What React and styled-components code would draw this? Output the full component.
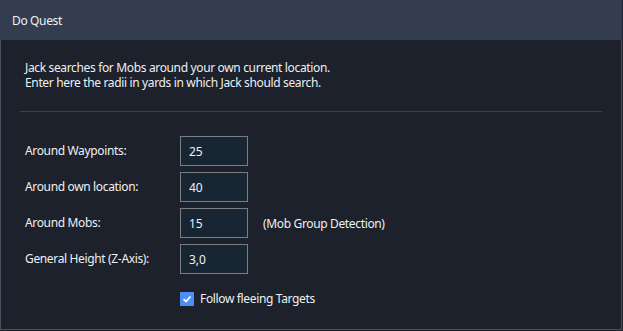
import { Fragment } from "react"
import styled, { createGlobalStyle } from "styled-components"

const GlobalStyle = createGlobalStyle`
  body {
    margin: 0;
    background: #1c212b;
    font-family: "Noto Sans", "Open Sans", sans-serif;
    font-size: 12px;
    letter-spacing: -0.35px;
    color: #eef0f3;
  }
`

const Panel = styled.div`
  width: 622px;
  height: 330px;
  display: flex;
  flex-direction: column;
  box-sizing: border-box;
`

const Header = styled.div`
  height: 40px;
  flex-shrink: 0;
  background: #343d4f;
  display: flex;
  align-items: center;
  padding-left: 12px;
`

const Body = styled.div`
  flex: 1;
  background: #1c212b;
  border: 1px solid #4a505c;
  border-top: none;
  padding: 20px 19px 0 19px;
`

const Intro = styled.p`
  margin: 0;
  padding: 0 5px;
  line-height: 15px;
`

const Separator = styled.hr`
  border: none;
  height: 1px;
  background: #3a404c;
  margin: 21px 0 24px 0;
`

const Form = styled.div`
  display: grid;
  grid-template-columns: 155px 68px auto;
  row-gap: 6px;
  padding-left: 5px;
  align-items: center;
`

const Label = styled.label`
  line-height: 30px;
`

const Input = styled.input`
  box-sizing: border-box;
  width: 68px;
  height: 30px;
  background: #182633;
  border: 1px solid #7a7d82;
  color: #eef0f3;
  font: inherit;
  padding: 0 8px;
  outline: none;
`

const Note = styled.span`
  padding-left: 15px;
`

const CheckRow = styled.label`
  grid-column: 2 / span 2;
  display: flex;
  align-items: center;
  gap: 6px;
  margin-top: 10px;
`

const Box = styled.span`
  width: 14px;
  height: 14px;
  background: #4c8df6;
  display: flex;
  align-items: center;
  justify-content: center;
`

const fields = [
  { label: "Around Waypoints:", value: "25" },
  { label: "Around own location:", value: "40" },
  { label: "Around Mobs:", value: "15", note: "(Mob Group Detection)" },
  { label: "General Height (Z-Axis):", value: "3,0" },
]

const App = () => {
  return (
    <>
      <GlobalStyle />
      <Panel>
        <Header>Do Quest</Header>
        <Body>
          <Intro>
            Jack searches for Mobs around your own current location.
            <br />
            Enter here the radii in yards in which Jack should search.
          </Intro>
          <Separator />
          <Form>
            {fields.map((f) => (
              <Fragment key={f.label}>
                <Label>{f.label}</Label>
                <Input defaultValue={f.value} />
                {f.note ? <Note>{f.note}</Note> : <span />}
              </Fragment>
            ))}
            <CheckRow>
              <Box>
                <svg width="10" height="10" viewBox="0 0 10 10">
                  <path d="M1.5 5.2 L4 7.5 L8.5 2.5" fill="none" stroke="#fff" strokeWidth="1.8" />
                </svg>
              </Box>
              Follow fleeing Targets
            </CheckRow>
          </Form>
        </Body>
      </Panel>
    </>
  )
}

export default App
